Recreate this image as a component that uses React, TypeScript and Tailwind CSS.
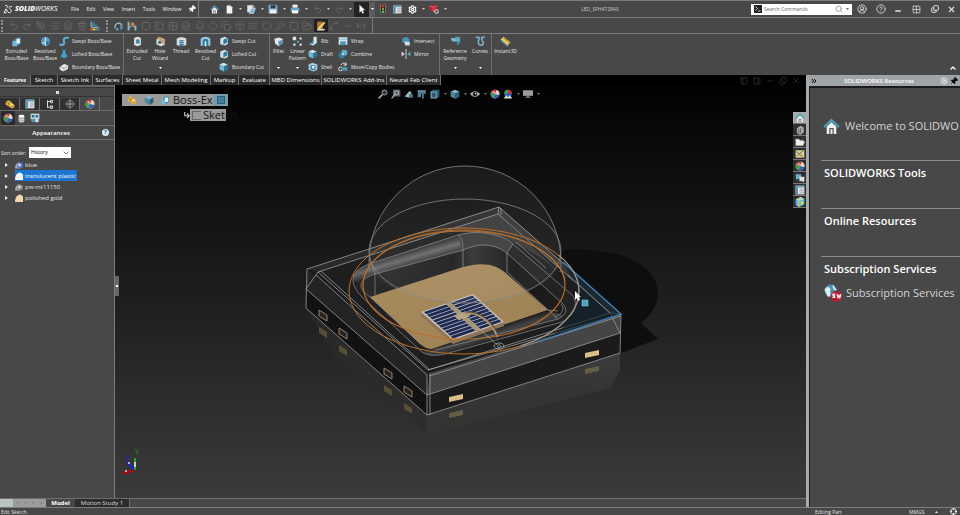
import { useState, type ReactNode } from 'react'
import {
  Bell,
  Box,
  ChevronDown,
  ChevronUp,
  ChevronsRight,
  CircleHelp,
  CircleUserRound,
  Copy,
  Crosshair,
  Diamond,
  FlipHorizontal2,
  FolderOpen,
  Grid2x2,
  Hexagon,
  Layers,
  List,
  Minus,
  PanelLeft,
  PanelRight,
  PenTool,
  Pin,
  Redo2,
  Search,
  Settings,
  Spline,
  Square,
  Trash2,
  Undo2,
  Waves,
  Wrench,
  X,
} from 'lucide-react'

/* ---------- icons ---------- */

const glyphs: Record<string, ReactNode> = {
  home: (
    <>
      <path d="M3.5 8v7h9V8L8 4z" fill="#f2f2f2" />
      <path d="M1 8.5 8 2l7 6.5" fill="none" stroke="#4f9ab8" strokeWidth="2.2" />
      <path d="M6.5 15v-5h3v5" fill="none" stroke="#555" strokeWidth="1.2" />
    </>
  ),
  file: (
    <>
      <path d="M3 1h7l3 3v11H3z" fill="#f5f5f5" />
      <path d="M10 1v3h3z" fill="#999" />
    </>
  ),
  open: (
    <>
      <path d="M2 2h7l2 2v9H2z" fill="#e6e6e6" />
      <path d="M5 15 8 7h7l-3 8z" fill="#7fb7d0" stroke="#d8e8ee" />
      <path d="M9 2c3 0 4 2 4 4" fill="none" stroke="#eee" strokeWidth="1.4" />
    </>
  ),
  save: (
    <>
      <path d="M1 1h12l2 2v12H1z" fill="#7fb3cf" />
      <path d="M4 2h8v5H4z" fill="#2d3f4a" />
      <path d="M3 9h10v6H3z" fill="#eee" />
    </>
  ),
  print: (
    <>
      <path d="M4 1h8v5H4z" fill="#f2f2f2" />
      <path d="M1 6h14v6H1z" fill="#5ba4c6" />
      <path d="M3 10h10v5H3z" fill="#fff" />
    </>
  ),
  cursor: <path d="M4 1v13l3-3 2.2 4.4 2-1L9 10h4z" fill="#fff" />,
  traffic: (
    <>
      <rect x="4" y="0" width="8" height="16" rx="3" fill="#222" stroke="#a9a37c" />
      <circle cx="8" cy="3.7" r="2" fill="#e04136" />
      <circle cx="8" cy="8" r="1.6" fill="#c7b458" />
      <circle cx="8" cy="12.3" r="2" fill="#5bd06a" />
    </>
  ),
  sheet: (
    <>
      <path d="M1 1h14v14H1z" fill="#f2f2f2" />
      <path d="M1 1h14v3H1zM1 4h4v11H1z" fill="#5b9ab8" />
      <path d="M7 6.5h7M7 9.5h7M7 12.5h7M2 7h2M2 10h2M2 13h2" stroke="#667" />
    </>
  ),
  cubeRed: (
    <>
      <path d="m7 1 6 2v6l-6 4-6-4V3z" fill="#c32234" />
      <path d="m1 3 6 2 6-2M7 5v8" fill="none" stroke="#ee8088" />
      <circle cx="12" cy="12" r="3" fill="#555" stroke="#fff" strokeWidth="1.3" />
    </>
  ),
  boss: (
    <>
      <path d="M5 5 9 2h5v9l-4 3H5z" fill="#3f8fb3" />
      <path d="M2 7h7v8H2z" fill="#74b9d6" />
      <path d="M8 4h5v7H8z" fill="#e8f0f3" />
    </>
  ),
  revolve: (
    <>
      <circle cx="8" cy="8" r="6.5" fill="#5a9fc0" />
      <path d="M8 2v12M3 11c4-1 6-4 5-9" stroke="#c4e2ef" strokeWidth="1.6" fill="none" />
      <path d="M8 8h6l-3 6z" fill="#2d6c8c" />
    </>
  ),
  sweep: (
    <path d="M2 14c5 1 7-1 6-5s0-7 6-6" fill="none" stroke="#58acd0" strokeWidth="3.6" strokeLinecap="round" />
  ),
  loft: <path d="M6 1h4l1 6 3 5-6 3-6-3 3-5z" fill="#4c9fc3" stroke="#235e78" />,
  boundary: (
    <>
      <path d="m1 8 7-5 7 2-1 6-7 4-6-3z" fill="#e9e9e9" />
      <path d="m2 8 6 2 6-4M8 10v4" fill="none" stroke="#777" />
    </>
  ),
  cut: (
    <>
      <path d="M3 3 8 1l5 2v10l-5 2-5-2z" fill="#dedede" />
      <path d="M6 5h5v6H6z" fill="#3d86a5" />
    </>
  ),
  hole: (
    <>
      <path d="M2 5 9 2l5 3v8l-6 2-6-3z" fill="#ddd" />
      <path d="m2 3 4-2 6 4 3 6-3 1-4-6z" fill="#c69a6b" />
      <circle cx="7" cy="9" r="2.5" fill="#3a6d86" />
    </>
  ),
  thread: (
    <>
      <path d="M1 4c4-3 10-3 14 0v9c-4 2-10 2-14 0z" fill="#dcdcdc" />
      <path d="M5 6h6v9H5z" fill="#3c7e9d" />
      <path d="M5 8h6M5 11h6" stroke="#a9d3e6" />
    </>
  ),
  revolvedCut: (
    <>
      <path d="M1 4c4-4 10-4 14 0v10H1z" fill="#9fcbe0" />
      <path d="M4 7c0-4 8-4 8 0v8h-3V8H7v7H4z" fill="#2f7a9c" />
      <path d="M7 8h2v7H7z" fill="#eee" />
    </>
  ),
  cutSmall: (
    <>
      <path d="M2 4 9 1l5 3v9l-5 2-7-2z" fill="#cfe0e8" />
      <path d="M7 14V8c0-3 3-4 6-4v6z" fill="#2f7a9c" />
    </>
  ),
  fillet: (
    <>
      <path d="M2 4 8 2l6 2v6l-6 5-5-4z" fill="#e6e6e6" />
      <path d="M8 7c3 0 6-1 6-3v6l-6 5z" fill="#4c97b8" />
    </>
  ),
  pattern: (
    <>
      <path d="M1 1h5v5H1zM11 2h3v3h-3zM2 11h3v3H2zM11 11h3v3h-3z" fill="#dbe7ec" />
      <path d="M7 7h3v3H7z" fill="#58a6c8" />
    </>
  ),
  rib: (
    <>
      <path d="M9 1h5v10l-6 4-6-2 6-4z" fill="#cfe5ee" />
      <path d="M9 5v7l-6 2z" fill="#3b8cb0" />
    </>
  ),
  draft: (
    <>
      <path d="m1 4 6-3 7 3-6 3z" fill="#cfe5ee" />
      <path d="m1 4 7 3v8l-7-3z" fill="#76b8d3" />
      <path d="m8 7 6-3 1 8-7 3z" fill="#2f7596" />
    </>
  ),
  shell: (
    <>
      <path d="m1 4 6-3 8 3v8l-6 3-8-3z" fill="#a8cfe0" />
      <path d="M4 5h8v7l-4 1-4-2z" fill="#2f7596" />
      <path d="M6 6h5l-1 5-4-1z" fill="#dcebf1" />
    </>
  ),
  wrap: (
    <>
      <path d="M1 2h14v12H1z" fill="#d7e7ee" />
      <path d="M1 5h14M4 9h8v5H4z" fill="#4b96b6" stroke="#4b96b6" />
    </>
  ),
  combine: (
    <>
      <circle cx="10" cy="6" r="5" fill="#64abcb" />
      <circle cx="6" cy="10" r="5" fill="#317c9f" />
      <path d="M6 6h4v4H6z" fill="#a5d4e8" />
    </>
  ),
  copyBody: (
    <>
      <circle cx="4" cy="11" r="3" fill="none" stroke="#ddd" strokeWidth="1.6" />
      <path d="M7 8h8v6H7z" fill="#4b96b6" />
      <path d="M5 5c2-4 6-4 8-1M13 1v4H9" fill="none" stroke="#eee" strokeWidth="1.6" />
    </>
  ),
  intersect: (
    <>
      <path d="M2 4 8 1l5 3v5l-6 3-5-3z" fill="#4a94b5" />
      <path d="M5 9h9v6H7z" fill="#c9dfe8" />
    </>
  ),
  mirror: (
    <>
      <path d="M1 4l5 4-5 4z" fill="#dedede" />
      <path d="m15 4-5 4 5 4z" fill="#58a6c8" />
      <path d="M8 0v16" stroke="#eee" strokeWidth="1.3" />
    </>
  ),
  refGeom: (
    <>
      <path d="M1 3h8l2 5H3z" fill="#7bb6cf" />
      <path d="M7 1h8v9l-5 4V8z" fill="#3f88a8" />
      <path d="M9 2h5v6H9z" fill="#6aa9c4" />
    </>
  ),
  curves: (
    <path
      d="M1 2h4c3 0-1 4 0 8 1 5 7 4 7 0 0-3-4-5-2-8h4"
      fill="none"
      stroke="#7eaec6"
      strokeWidth="2.400"
    />
  ),
  instant: (
    <>
      <path d="m1 5 4-4 10 8-4 5z" fill="#e9cc5b" />
      <path d="m1 5 10 9v2L1 8z" fill="#3d87a7" />
      <path d="m5 3 2 2m0-1 2 2m0 0 2 2m0 0 2 2" stroke="#6b5c1a" />
    </>
  ),
  part: (
    <>
      <path d="M1 5 5 2l5 2 1 3 4 2v4l-4 2-6-4-4-2z" fill="#e1b44a" />
      <path d="m1 5 5 2 4-3M6 7v4M11 11v4" fill="none" stroke="#8d6511" />
      <circle cx="10.500" cy="8.500" r="2" fill="#f4dc94" />
    </>
  ),
  body: (
    <>
      <path d="m1 4 7-3 7 3-6 3z" fill="#86b7c9" />
      <path d="m1 4 8 3v9l-8-4z" fill="#4d8aa1" />
      <path d="m9 7 6-3v8l-6 4z" fill="#2d6177" />
    </>
  ),
  tree: (
    <path d="M4 2v12M4 4h5M4 13h5M9 2h3v4H9zM9 11h3v4H9z" fill="none" stroke="#e5e5e5" strokeWidth="1.5" />
  ),
  target: (
    <>
      <circle cx="8" cy="8" r="5.500" fill="none" stroke="#aaa" />
      <path d="M8 0v16M0 8h16" stroke="#aaa" />
      <circle cx="8" cy="8" r="2" fill="none" stroke="#aaa" />
    </>
  ),
  ball: (
    <>
      <circle cx="8" cy="8" r="7" fill="#e9e9e9" />
      <path d="M8 8 11 1.500A7 7 0 0 0 2 5z" fill="#ca2f38" />
      <path d="M8 8 2 5a7 7 0 0 0 4 9.500z" fill="#3f9f47" />
      <path d="m8 8-2 6.500A7 7 0 0 0 15 9z" fill="#315fba" />
      <path d="m8 8 7 1a7 7 0 0 0-4-7.500z" fill="#ecd3bd" />
      <circle cx="6" cy="5" r="1.800" fill="#fff" opacity=".6" />
    </>
  ),
  scene: (
    <>
      <circle cx="8" cy="7" r="6" fill="#315fba" />
      <path d="M8 7V1a6 6 0 0 0-6 6z" fill="#3f9f47" />
      <path d="M8 7V1a6 6 0 0 1 6 6z" fill="#ca2f38" />
      <path d="m1 15 4-5 3 3 3-3 4 5z" fill="#ddd" />
    </>
  ),
  disc: (
    <>
      <path d="M3 3v10c0 3 10 3 10 0V3z" fill="#d0d0d0" />
      <ellipse cx="8" cy="3.500" rx="5" ry="2" fill="#fff" />
      <path d="M3 7c2 2 8 2 10 0M3 11c2 2 8 2 10 0" fill="none" stroke="#8a8a8a" />
    </>
  ),
  decal: (
    <>
      <path d="M1 1h14v9H1z" fill="#bcd7e3" />
      <path d="M3 3h4v4H3zM9 3h4v4H9z" fill="#37708a" />
      <circle cx="5" cy="12" r="3" fill="#4f98b8" />
      <circle cx="11" cy="12" r="3" fill="#dcdcdc" />
    </>
  ),
  lens: (
    <>
      <circle cx="10.500" cy="5.500" r="4" fill="#27363d" stroke="#93a3ab" strokeWidth="1.600" />
      <path d="m7 9-6 6" stroke="#b5b0a6" strokeWidth="2.400" />
    </>
  ),
  zoomArea: (
    <>
      <path d="M3 1h12v11H3z" fill="#5d6468" />
      <circle cx="9" cy="6" r="3.300" fill="none" stroke="#a9b6bc" strokeWidth="1.5" />
      <path d="m7 8-6 7" stroke="#a9b6bc" strokeWidth="2" />
    </>
  ),
  view: (
    <>
      <path d="m1 12 8-9 3 2-3 9z" fill="#a9b9c0" />
      <path d="M8 8h6v6H8z" fill="#4d7d90" />
    </>
  ),
  section: (
    <>
      <path d="M1 3h13v5h-3v7H8V8H5v5H1z" fill="#47788b" />
      <path d="M1 3h13M5 8v5" stroke="#a1bcc7" strokeWidth="1.5" />
    </>
  ),
  viewCube: (
    <>
      <path d="M4 1h11v11l-4 3H1V4z" fill="#2d6177" />
      <path d="M1 4h10v11H1z" fill="#6c98a9" />
      <path d="M3 6h6v7H3z" fill="#33596a" />
    </>
  ),
  eye: (
    <>
      <path d="M0 8c4-6 12-6 16 0-4 6-12 6-16 0z" fill="#a5a5a5" />
      <circle cx="8" cy="8" r="3.500" fill="#222" />
      <circle cx="9" cy="7" r="1.200" fill="#eee" />
    </>
  ),
  monitor: (
    <>
      <path d="M0 2h16v9H0z" fill="#9b9b9b" />
      <path d="M6 11h4v2h3v1H3v-1h3z" fill="#888" />
    </>
  ),
  chart: (
    <>
      <path d="M2 1v9h12" fill="none" stroke="#9dc3d4" strokeWidth="1.6" />
      <path d="M3 2h5v3h3v4H3z" fill="#42748a" />
      <path d="M0 12h4v3H0z" fill="#dd4b43" />
      <path d="M4 12h4v3H4z" fill="#e4c547" />
      <path d="M8 12h4v3H8z" fill="#59b263" />
      <path d="M12 12h4v3h-4z" fill="#8561c8" />
    </>
  ),
  link: (
    <>
      <path d="M2 12a6 6 0 1 1 11-5" fill="none" stroke="#9ec0cf" strokeWidth="2" />
      <circle cx="5" cy="13" r="2" fill="#5c9fbd" />
      <path d="m9 6 6 4-4 5z" fill="#4d95b5" />
    </>
  ),
  mate: (
    <>
      <path d="M1 1h3v14H1zM12 7h3v8h-3z" fill="#87b8cd" />
      <circle cx="9" cy="5" r="3" fill="#d6803b" />
      <path d="M7 8 4 11m6-3 2 2" stroke="#ddd" strokeWidth="1.500" />
    </>
  ),
  bolt: (
    <>
      <path d="M2 1h9v14H2z" fill="#b27a35" />
      <path d="M4 10 13 1l2 2-8 9-4 1z" fill="#f5d26a" />
      <path d="M2 13h12v2H2z" fill="#eee" />
    </>
  ),
  library: (
    <>
      <path d="m3 5 6-4 5 3v8l-6 4-5-3z" fill="#aaa" />
      <path d="M6 6v8M9 5v8" stroke="#555" strokeWidth="1.3" />
    </>
  ),
  folder: <path d="M1 3h5l2 2h6v2h2l-3 7H1z" fill="#eee" stroke="#777" />,
  palette: (
    <>
      <path d="M1 2h14v12H1z" fill="#d8cda1" />
      <path d="m2 4 5 4 6-5M3 12l4-4 6 5" fill="none" stroke="#766b32" strokeWidth="1.5" />
    </>
  ),
  forum: (
    <>
      <path d="M1 2h9v7H5l-3 2z" fill="#6ab0ce" />
      <path d="M7 6h8v6l-1 3-2-2H7z" fill="#ddd" />
    </>
  ),
  cubeYellow: (
    <>
      <path d="m1 4 8-4 6 3v9l-8 4-6-3z" fill="#4eb3df" />
      <path d="m1 4 6 2 8-3-6-3z" fill="#9be0f6" />
      <path d="M5 6v9l2 1V6zM9 1l-5 3 2 1 6-3zM9 8l4-2v5l-4 2z" fill="#f0d24d" />
    </>
  ),
  globe: (
    <>
      <circle cx="6" cy="6" r="5.500" fill="#4d91ae" />
      <path d="M1 5c3-4 5 0 4 1s2 3-1 5zM8 1c0 3 1 4 3 4" fill="#dff0f5" stroke="#dff0f5" />
      <circle cx="11" cy="11" r="5" fill="#b31f2e" />
      <path d="M10 9H8v1.500h1.500V12H7.500M11.500 9l1 3 .8-2 .8 2 1-3" fill="none" stroke="#fff" />
    </>
  ),
}

function Glyph({ name, className = 'size-[10px]' }: { name: string; className?: string }) {
  return (
    <svg viewBox="0 0 16 16" className={`shrink-0 ${className}`} aria-hidden="true">
      {glyphs[name]}
    </svg>
  )
}

function Caret({ className = 'text-white' }: { className?: string }) {
  return (
    <svg viewBox="0 0 6 4" className={`h-[2px] w-[3px] shrink-0 ${className}`} aria-hidden="true">
      <path d="M0 0h6L3 4z" fill="currentColor" />
    </svg>
  )
}

/* ---------- title bar ---------- */

const menus = [
  { label: 'File', width: 'w-[16px]' },
  { label: 'Edit', width: 'w-[16px]' },
  { label: 'View', width: 'w-[19px]' },
  { label: 'Insert', width: 'w-[21px]' },
  { label: 'Tools', width: 'w-[20px]' },
  { label: 'Window', width: 'w-[26px]' },
]

function QuickButton({ label, children }: { label: string; children: ReactNode }) {
  return (
    <>
      <button aria-label={label} className="flex w-[14px] shrink-0 justify-center">
        {children}
      </button>
      <span className="flex w-[8px] shrink-0 justify-center">
        <Caret className="text-[#c8c8c8]" />
      </span>
    </>
  )
}

function TitleBar() {
  const [query, setQuery] = useState('')
  return (
    <header className="flex h-[18px] shrink-0 items-center border-y border-[#7c7c7c] bg-[#484848]">
      <div className="flex w-[67px] shrink-0 items-center gap-[2px] pl-[3px] text-white">
        <svg viewBox="0 0 20 20" className="h-[11px] w-[10px]" fill="none" stroke="#fff" strokeWidth="1.800">
          <path d="M4 2c6-1 7 3 3 5M2 17c8 0 9-8 2-7M2 17l4-8M18 4c-7-1-6 4-3 6s2 7-5 6" />
        </svg>
        <span className="text-[7px] italic leading-[10px]">
          <b className="font-extrabold">SOLID</b>WORKS
        </span>
      </div>
      <nav className="flex shrink-0 text-[#f2f2f2]">
        {menus.map((m) => (
          <button key={m.label} className={`${m.width} shrink-0 text-center`}>
            {m.label}
          </button>
        ))}
      </nav>
      <button aria-label="Pin menu" className="flex w-[13px] shrink-0 justify-center">
        <Pin className="size-[8px] rotate-45 fill-white text-white" />
      </button>
      <div className="flex h-full shrink-0 items-center border-l border-[#7c7c7c] pl-[8px]">
        <button aria-label="Home" className="flex w-[15px] justify-center">
          <Glyph name="home" className="size-[9px]" />
        </button>
        <QuickButton label="New">
          <Glyph name="file" className="size-[9px]" />
        </QuickButton>
        <QuickButton label="Open">
          <Glyph name="open" />
        </QuickButton>
        <QuickButton label="Save">
          <Glyph name="save" />
        </QuickButton>
        <QuickButton label="Print">
          <Glyph name="print" />
        </QuickButton>
        <QuickButton label="Undo">
          <Undo2 className="size-[9px] text-[#6c6c6c]" />
        </QuickButton>
        <QuickButton label="Redo">
          <Redo2 className="size-[9px] text-[#6c6c6c]" />
        </QuickButton>
        <button aria-label="Select" className="flex h-[15px] w-[15px] items-center justify-center bg-[#222]">
          <Glyph name="cursor" />
        </button>
        <span className="flex h-[15px] w-[6px] items-center justify-center bg-[#5c5c5c]">
          <Caret />
        </span>
        <button aria-label="Rebuild" className="flex w-[15px] justify-center">
          <Glyph name="traffic" />
        </button>
        <button aria-label="File properties" className="flex w-[15px] justify-center">
          <Glyph name="sheet" className="size-[9px]" />
        </button>
        <QuickButton label="Options">
          <Settings className="size-[9px] text-white" strokeWidth={3} />
        </QuickButton>
        <QuickButton label="Account">
          <Glyph name="cubeRed" />
        </QuickButton>
      </div>
      <h1 className="flex-1 text-center font-normal text-[#c8c8c8]">LED_SFH4728AS</h1>
      <label className="flex h-[11px] w-[101px] shrink-0 items-center bg-white px-[3px]">
        <svg viewBox="0 0 16 16" className="size-[8px]" aria-hidden="true">
          <path d="M0 0h16v16H0z" fill="#222" />
          <path d="m3 3 4 4-4 4M8 12h5" fill="none" stroke="#fff" strokeWidth="1.500" />
        </svg>
        <input
          aria-label="Search Commands"
          placeholder="Search Commands"
          value={query}
          onChange={(e) => setQuery(e.target.value)}
          className="min-w-0 flex-1 px-[2px] text-[5px] leading-[8px] text-[#333] outline-none placeholder:text-[#666]"
        />
        <Search className="mr-[3px] size-[8px] text-[#777]" />
        <Caret className="text-[#666]" />
      </label>
      <div className="flex w-[108px] shrink-0 items-center text-[#e2e2e2]">
        <button aria-label="Login" className="flex w-[20px] justify-center">
          <CircleUserRound className="size-[10px]" />
        </button>
        <button aria-label="Help" className="flex w-[17px] justify-center">
          <CircleHelp className="size-[10px]" />
        </button>
        <button aria-label="Minimize" className="flex w-[18px] justify-center pt-[3px]">
          <Minus className="size-[8px]" strokeWidth={4} />
        </button>
        <button aria-label="Span displays" className="flex w-[19px] justify-center">
          <Grid2x2 className="size-[9px]" />
        </button>
        <button aria-label="Restore" className="flex w-[17px] justify-center">
          <Copy className="size-[8px] -scale-y-100" strokeWidth={3} />
        </button>
        <button aria-label="Close" className="flex w-[17px] justify-center">
          <X className="size-[9px]" strokeWidth={3} />
        </button>
      </div>
    </header>
  )
}

/* ---------- dimmed tool strip ---------- */

const dimFirst = [Undo2, Redo2, PenTool, List, Layers, Trash2]
const dimMiddle = [Square, PanelLeft, Grid2x2, Layers, Bell, Diamond, Copy, Box, Waves, Hexagon, Wrench, Square, FolderOpen]
const dimLast = [Spline, Minus, FlipHorizontal2]

function ToolStrip() {
  const dim = (Icon: typeof Undo2, i: number) => (
    <button key={i} aria-label={`Sketch tool ${i + 1}`} disabled className="flex flex-1 justify-center">
      <Icon className="size-[10px] text-[#6a6a6a]" />
    </button>
  )
  return (
    <div className="flex h-[16px] shrink-0 items-center border-b border-[#7c7c7c]">
      <span className="mr-[4px] ml-[1px] h-[12px] border-l-2 border-dotted border-[#8f8f8f]" />
      <div className="flex w-[95px] items-center">
        {dimFirst.map(dim)}
        <button aria-label="Appearance chart" className="flex flex-1 justify-center">
          <Glyph name="chart" />
        </button>
      </div>
      <span className="mr-[4px] ml-[4px] h-[12px] border-l-2 border-dotted border-[#8f8f8f]" />
      <div className="flex h-full w-[261px] items-center border-r border-[#7c7c7c] pr-[4px]">
        <button aria-label="Link" className="flex flex-1 justify-center">
          <Glyph name="link" />
        </button>
        <button aria-label="Mate" className="flex flex-1 justify-center">
          <Glyph name="mate" />
        </button>
        {dimMiddle.map(dim)}
        <button aria-label="Sketch" className="flex h-[13px] flex-1 items-center justify-center bg-[#222]">
          <Glyph name="bolt" />
        </button>
        {dimLast.map(dim)}
      </div>
    </div>
  )
}

/* ---------- ribbon ---------- */

interface BigProps {
  icon: string
  lines: string[]
  width: string
  menu?: boolean
}

function BigButton({ icon, lines, width, menu }: BigProps) {
  return (
    <button className={`${width} flex h-full shrink-0 flex-col items-center pt-[2px] text-[#e6e6e6]`}>
      <Glyph name={icon} className="size-[11px]" />
      <span className="mt-[1px] h-[16px] whitespace-nowrap text-center leading-[7px]">
        {lines.map((line) => (
          <span key={line} className="block">
            {line}
          </span>
        ))}
      </span>
      {menu && (
        <span className="pt-[3px]">
          <Caret />
        </span>
      )}
    </button>
  )
}

function SmallColumn({ items, width }: { items: [string, string][]; width: string }) {
  return (
    <div className={`${width} flex shrink-0 flex-col`}>
      {items.map(([icon, label]) => (
        <button key={label} className="flex h-[13px] items-center gap-[3px] whitespace-nowrap text-[#e6e6e6]">
          <Glyph name={icon} />
          {label}
        </button>
      ))}
    </div>
  )
}

function Ribbon() {
  const group = 'flex shrink-0 border-r border-[#6e6e6e]'
  return (
    <div className="flex h-[41px] shrink-0">
      <div className={`${group} w-[124px] pl-[2px]`}>
        <BigButton icon="boss" lines={['Extruded', 'Boss/Base']} width="w-[29px]" />
        <BigButton icon="revolve" lines={['Revolved', 'Boss/Base']} width="w-[28px]" />
        <SmallColumn
          width="w-[62px]"
          items={[
            ['sweep', 'Swept Boss/Base'],
            ['loft', 'Lofted Boss/Base'],
            ['boundary', 'Boundary Boss/Base'],
          ]}
        />
      </div>
      <div className={`${group} w-[146px]`}>
        <BigButton icon="cut" lines={['Extruded', 'Cut']} width="w-[26px]" />
        <BigButton icon="hole" lines={['Hole', 'Wizard']} width="w-[20px]" menu />
        <BigButton icon="thread" lines={['Thread']} width="w-[22px]" />
        <BigButton icon="revolvedCut" lines={['Revolved', 'Cut']} width="w-[27px]" />
        <SmallColumn
          width="w-[50px]"
          items={[
            ['cutSmall', 'Swept Cut'],
            ['cutSmall', 'Lofted Cut'],
            ['draft', 'Boundary Cut'],
          ]}
        />
      </div>
      <div className={`${group} w-[170px]`}>
        <BigButton icon="fillet" lines={['Fillet']} width="w-[17px]" menu />
        <BigButton icon="pattern" lines={['Linear', 'Pattern']} width="w-[21px]" menu />
        <SmallColumn
          width="w-[30px]"
          items={[
            ['rib', 'Rib'],
            ['draft', 'Draft'],
            ['shell', 'Shell'],
          ]}
        />
        <SmallColumn
          width="w-[63px]"
          items={[
            ['wrap', 'Wrap'],
            ['combine', 'Combine'],
            ['copyBody', 'Move/Copy Bodies'],
          ]}
        />
        <SmallColumn
          width="w-[38px]"
          items={[
            ['intersect', 'Intersect'],
            ['mirror', 'Mirror'],
          ]}
        />
      </div>
      <div className={`${group} w-[52px]`}>
        <BigButton icon="refGeom" lines={['Reference', 'Geometry']} width="w-[30px]" menu />
        <BigButton icon="curves" lines={['Curves']} width="w-[20px]" menu />
      </div>
      <BigButton icon="instant" lines={['Instant3D']} width="w-[27px]" />
      <button aria-label="Collapse ribbon" className="ml-auto self-end p-[3px]">
        <ChevronUp className="size-[8px] text-white" strokeWidth={4} />
      </button>
    </div>
  )
}

const commandTabs = [
  { label: 'Features', width: 'w-[31px]' },
  { label: 'Sketch', width: 'w-[27px]' },
  { label: 'Sketch Ink', width: 'w-[35px]' },
  { label: 'Surfaces', width: 'w-[30px]' },
  { label: 'Sheet Metal', width: 'w-[39px]' },
  { label: 'Mesh Modeling', width: 'w-[49px]' },
  { label: 'Markup', width: 'w-[28px]' },
  { label: 'Evaluate', width: 'w-[31px]' },
  { label: 'MBD Dimensions', width: 'w-[52px]' },
  { label: 'SOLIDWORKS Add-Ins', width: 'w-[65px]' },
  { label: 'Neural Fab Client', width: 'w-[54px]' },
]

function CommandTabs() {
  const [active, setActive] = useState('Features')
  return (
    <div className="flex h-[10px] shrink-0 bg-black">
      <div role="tablist" className="flex">
        {commandTabs.map((tab) => (
          <button
            key={tab.label}
            role="tab"
            aria-selected={tab.label === active}
            onClick={() => setActive(tab.label)}
            className={`${tab.width} shrink-0 whitespace-nowrap border-r border-[#6e6e6e] text-center leading-[10px] text-white ${
              tab.label === active ? 'bg-[#484848] text-[5px] font-bold' : 'bg-[#2b2b2b] text-[6px]'
            }`}
          >
            {tab.label}
          </button>
        ))}
      </div>
      <div className="ml-auto flex items-end gap-[5px] pr-[6px] text-[#3a3a3a]">
        <PanelLeft className="size-[8px]" />
        <PanelRight className="size-[8px]" />
        <Minus className="size-[8px]" />
        <Copy className="size-[8px] -scale-y-100" />
        <X className="size-[8px]" />
      </div>
    </div>
  )
}

/* ---------- appearances panel ---------- */

const managerTabs = ['part', 'sheet', 'tree', 'target', 'ball']

const appearances = [
  { name: 'blue', color: '#5b78c9', round: true },
  { name: 'translucent plastic', color: '#f2f6fa', round: false },
  { name: 'pw-mt11150', color: '#8b8b8b', round: true },
  { name: 'polished gold', color: '#f0d9ab', round: false },
]

function Swatch({ color, round }: { color: string; round: boolean }) {
  return (
    <svg viewBox="0 0 16 16" className="size-[8px] shrink-0" aria-hidden="true">
      {round ? (
        <>
          <path d="M0 15C0 8 3 4 8 2l2 13z" fill="#aaa" />
          <circle cx="10" cy="9" r="6" fill={color} />
          <circle cx="9" cy="8" r="2.500" fill="#eee" />
        </>
      ) : (
        <path d="M0 16C0 7 4 1 11 1l5 4v11z" fill={color} />
      )}
    </svg>
  )
}

function AppearancePanel() {
  const [selected, setSelected] = useState('translucent plastic')
  return (
    <aside className="flex w-[115px] shrink-0 flex-col border-r border-[#7c7c7c] bg-[#484848] text-[#e4e4e4]">
      <div className="h-[3px] border-b border-[#333] bg-[#666]" />
      <div className="flex h-[9px] items-center justify-center border-b border-[#333]">
        <span className="size-[3px] bg-[#ddd]" />
      </div>
      <div className="flex h-[14px] border-b border-[#6e6e6e] pt-[1px]">
        {managerTabs.map((icon) => (
          <button
            key={icon}
            aria-label={icon}
            className={`flex w-[20px] items-center justify-center border-r border-[#6e6e6e] ${
              icon === 'ball' ? 'bg-[#484848]' : 'bg-[#303030]'
            }`}
          >
            <Glyph name={icon} />
          </button>
        ))}
      </div>
      <div className="flex h-[15px] items-center border-b border-[#6e6e6e] pl-[1px]">
        <button aria-label="View appearances" className="flex size-[14px] items-center justify-center bg-[#2a2a2a]">
          <Glyph name="ball" />
        </button>
        <button aria-label="View decals" className="flex w-[13px] justify-center">
          <Glyph name="disc" className="size-[9px]" />
        </button>
        <button aria-label="View scene" className="flex w-[14px] justify-center">
          <Glyph name="decal" />
        </button>
      </div>
      <div className="flex h-[14px] items-center border-b border-[#6e6e6e]">
        <h2 className="w-[102px] text-center text-[6px] font-semibold text-white">Appearances</h2>
        <button
          aria-label="Help"
          className="size-[7px] rounded-full bg-[#d7ecf5] text-center font-bold leading-[7px] text-[#26566b]"
        >
          ?
        </button>
      </div>
      <div className="flex h-[19px] items-center pt-[6px] pl-[1px]">
        <label htmlFor="sort" className="w-[28px] whitespace-nowrap">
          Sort order:
        </label>
        <div className="relative">
          <select
            id="sort"
            defaultValue="History"
            className="block h-[11px] w-[42px] appearance-none bg-white pl-[2px] leading-[11px] text-black"
          >
            <option>History</option>
          </select>
          <ChevronDown className="pointer-events-none absolute top-[2px] right-[1px] size-[8px] text-[#333]" />
        </div>
      </div>
      <ul>
        {appearances.map((a) => (
          <li key={a.name} className="flex h-[11px] items-center">
            <svg viewBox="0 0 4 6" className="mr-[7px] ml-[5px] h-[4px] w-[3px]" aria-hidden="true">
              <path d="M0 0v6l4-3z" fill="#fff" />
            </svg>
            <button
              onClick={() => setSelected(a.name)}
              className={`flex h-[11px] items-center gap-[2px] pr-[1px] text-[6px] ${
                a.name === selected ? 'bg-[#1b75d1] text-white' : ''
              }`}
            >
              <Swatch color={a.color} round={a.round} />
              {a.name}
            </button>
          </li>
        ))}
      </ul>
    </aside>
  )
}

/* ---------- 3D view ---------- */

const leftPads = [
  [323, 315],
  [343, 333],
  [388, 373],
  [408, 391],
]
const rightPads = [
  [592, 354],
  [456, 398],
]

const cavityRim =
  'M353 280c0-9 9-14 22-18l83-27c14-4 28-3 40 1 6 2 10 4 15 8l59 51c7 8 3 20-10 27L445 354c-10 2-17 2-23-2l-60-55c-6-6-9-12-9-17z'
const cavityWall =
  'M361 286c0-6 5-9 14-12l88-24c7-3 13-5 19-5 11 0 18 3 25 8l56 51c5 5 3 11-5 15L435 350l-15-6-50-47c-5-4-9-7-9-11z'

function Scene() {
  return (
    <svg
      viewBox="115 85 691 413"
      preserveAspectRatio="xMidYMid slice"
      className="absolute inset-0 size-full"
      aria-hidden="true"
    >
      <defs>
        <linearGradient id="backdrop" x1="0" y1="0" x2="0" y2="1">
          <stop offset="0" stopColor="#020202" />
          <stop offset=".25" stopColor="#101010" />
          <stop offset=".55" stopColor="#202020" />
          <stop offset="1" stopColor="#3b3b3b" />
        </linearGradient>
        <linearGradient id="gold" x1="0" y1="0" x2="1" y2="1">
          <stop offset="0" stopColor="#a98c5e" />
          <stop offset="1" stopColor="#9c8053" />
        </linearGradient>
        {/* runs across the back-left edge so the rim reads as rounded */}
        <linearGradient id="rim" gradientUnits="userSpaceOnUse" x1="406" y1="250" x2="411" y2="267">
          <stop offset="0" stopColor="#242424" />
          <stop offset=".5" stopColor="#6a6868" />
          <stop offset="1" stopColor="#262626" />
        </linearGradient>
        <linearGradient id="frontRim" gradientUnits="userSpaceOnUse" x1="490" y1="328" x2="494" y2="341">
          <stop offset="0" stopColor="#1c1c1c" />
          <stop offset=".5" stopColor="#444" />
          <stop offset="1" stopColor="#1e1e1e" />
        </linearGradient>
        <linearGradient id="wall" x1="0" y1="0" x2="1" y2="0">
          <stop offset="0" stopColor="#2c2c2e" />
          <stop offset=".45" stopColor="#1b1b1d" />
          <stop offset=".55" stopColor="#303030" />
          <stop offset=".75" stopColor="#161616" />
          <stop offset="1" stopColor="#1e1e1e" />
        </linearGradient>
        <linearGradient id="mirror" x1="0" y1="0" x2="0" y2="1">
          <stop offset="0" stopColor="#4a4a4a" stopOpacity=".6" />
          <stop offset="1" stopColor="#3a3a3a" stopOpacity=".2" />
        </linearGradient>
        <clipPath id="rightArc">
          <path d="M560 252h30v100h-72z" />
        </clipPath>
      </defs>
      <path d="M115 85h691v413H115z" fill="url(#backdrop)" />

      {/* cast shadow */}
      <path d="M560 250c50-5 98 12 98 43 0 12-7 22-17 30l17 16-37 14-60-60z" fill="#0e0e0e" />

      {/* floor reflection */}
      <path d="m306 308 121 107v20l-90-75z" fill="#2c2c2c" opacity=".7" />
      <path d="m427 415 193-62v18l-10 17-183 47z" fill="url(#mirror)" />

      {/* package body */}
      <path d="m307 269 192-62 122 107-1 39-193 62-121-107z" fill="#1c1c1c" />
      <path d="m306 289 121 106v20L306 308z" fill="#121213" />
      <path d="m427 395 193-62v20l-193 62z" fill="#1b1b1d" />
      <path d="m430 373 191-59-1 19-193 62z" fill="#454545" />
      <path d="m307 269 120 104v22L306 289z" fill="#242424" />
      <path d="m318 272 180-58 112 99-181 57z" fill="#1e1e1f" />
      <path d="m307 269 192-62v7l-181 58z" fill="#2a2a2a" />
      <path d="m498 214 1-7 122 107-11-1z" fill="#363636" />
      <path d="m498 214-58 19c28-4 55 1 78 12 17 8 32 19 42 28z" fill="#383838" />

      {/* cavity */}
      <path d={cavityRim} fill="#222" />
      <path d="M353 280c0-9 9-14 22-18l83-27 5 15-88 24c-9 3-14 6-14 12z" fill="url(#rim)" />
      <path d="M458 235c14-4 28-3 40 1l15 8-6 9c-7-5-14-8-25-8-6 0-12 2-19 5z" fill="#3a3a3a" />
      <path d={cavityWall} fill="url(#wall)" />
      <path d="m370 297 93-30c18-5 33-4 45 8l40 35-116 39c-5 0-8-2-12-5z" fill="url(#gold)" />
      <path d="m432 349 116-39 14 5c2 4-2 6-6 8L445 354c-10 2-17 2-23-2z" fill="url(#frontRim)" />
      <g fill="none" stroke="#8f8f8f" strokeWidth=".7">
        <path d={cavityRim} />
        <path d="M370 297c-5-4-9-7-9-11 0-6 5-9 14-12l88-24c7-3 13-5 19-5 11 0 18 3 25 8l56 51c5 5 3 11-5 15L435 350" />
        <path d="m513 244-6 9v20M463 250v17M458 235c4 3 5 8 5 15M375 274v21M508 273l50 46M369 258l6 16M370 297l52 48M548 310l10 1" />
        <path d="M546 268 516 242M555 318c8-5 10-10 6-14" />
      </g>

      {/* die */}
      <path d="m421 312 32 28v4l-32-28zM453 340l51-18v4l-51 18z" fill="#8d7658" />
      <path d="m421 312 52-18 31 28-51 18z" fill="#c9c0b2" />
      <g transform="matrix(52 -18 31 28 421 312)">
        {Array.from({ length: 10 }, (_, i) => (
          <g key={i} fill="#1b2a58">
            <rect x=".04" y={0.03 + i * 0.096} width=".43" height=".075" />
            <rect x=".56" y={0.03 + i * 0.096} width=".41" height=".075" />
          </g>
        ))}
        <path d="M.47 0h.09v1h-.09z" fill="#a69475" />
        <path d="M.4 .38h.22v.17H.4z" fill="#b6a486" />
      </g>
      <path d="M464 313c14-2 27 8 34 24" fill="none" stroke="#a78f6a" strokeWidth="2.600" />
      <path d="M466 312c14-1 27 9 33 25" fill="none" stroke="#302a22" strokeWidth=".8" />
      <path d="m468 318 29 27" stroke="#a3a3a3" strokeWidth=".7" />
      <ellipse cx="499" cy="346" rx="5" ry="3" fill="none" stroke="#aaa" strokeWidth=".8" />
      <circle cx="499" cy="346" r="1.500" fill="none" stroke="#aaa" strokeWidth=".6" />

      {/* body edges */}
      <g fill="none" stroke="#9c9c9c" strokeWidth=".8" strokeLinejoin="round">
        <path d="m307 269 192-62 122 107M307 269l-1 39 121 107 193-62 1-39M306 289l121 106 193-62" />
        <path d="m318 272 180-58 112 99M318 272l110 98 182-57 11 1M318 272l-12 17M610 313l10 20" />
        <path d="m316 275 111 100v40M430 373v42M428 370l193-56M429 376l192-60M321 271l109 99M498 214l1-7M501 208v7" />
      </g>

      {/* blue face highlight */}
      <path d="m563 262 58 52-84 28c22-8 42-22 42-50z" fill="#10232f" opacity=".65" />
      <path d="m568 275 42 38" stroke="#9a9a9a" strokeWidth=".8" />
      <path d="m563 262 58 52-84 28" fill="none" stroke="#3c80bb" strokeWidth="1.300" />

      {/* lens dome */}
      <path d="M369 262a96 96 0 0 1 192 0c-6 22-45 41-96 41s-92-18-96-41z" fill="#fff" opacity=".06" />
      <path d="M370 272c-1-4-1-7-1-10a96 96 0 0 1 192 0c0 3 0 6-1 10" fill="none" stroke="#8a8a8a" strokeWidth=".8" />
      <ellipse cx="465" cy="251" rx="96" ry="52" fill="none" stroke="#858585" strokeWidth=".8" />
      <g fill="none" stroke="#bb6f2b">
        <ellipse cx="464" cy="291" rx="115" ry="63" />
        <ellipse cx="464" cy="285" rx="101" ry="54" strokeWidth="1.200" />
        <path d="M364 278c8-30 54-48 100-48 50 0 92 21 101 49" strokeWidth=".8" />
      </g>
      <ellipse cx="464" cy="291" rx="115" ry="63" fill="none" stroke="#999" strokeWidth="1.200" clipPath="url(#rightArc)" />

      {/* contact pads */}
      {leftPads.map(([x, y]) => (
        <g key={x} transform={`translate(${x} ${y})`}>
          <path d="m-4-5 8 5v6l-8-5z" fill="#29231e" stroke="#b39b84" strokeWidth=".8" />
          <path d="m-4 12 8 5v6l-8-5z" fill="#75683f" opacity=".6" />
        </g>
      ))}
      {rightPads.map(([x, y]) => (
        <g key={x} transform={`translate(${x} ${y})`}>
          <path d="m-7-1 14-3v5l-14 3z" fill="#d9bf86" />
          <path d="m-7 15 14-3v5l-14 3z" fill="#75714c" opacity=".7" />
        </g>
      ))}

      {/* pointer */}
      <path d="M575 291v9l2-2 1 3 2-1-1-3h2z" fill="#fff" />
      <path d="M582 300h6v6h-6z" fill="#4ba3c0" stroke="#8ccbdc" strokeWidth=".6" />

      {/* triad */}
      <g fill="none">
        <path d="m135 470-11 3" stroke="#a00d12" strokeWidth="2.500" />
        <path d="m121 473 5-3v5z" fill="#a00d12" />
        <path d="m135 470-7-7" stroke="#2524c4" strokeWidth="2.500" />
        <path d="M135 470v-12" stroke="#22a32b" strokeWidth="2" />
        <path d="M135 467v-5" stroke="#eee" strokeWidth="1.500" />
        <circle cx="129" cy="463" r="1" fill="#ddd" />
        <circle cx="126" cy="471" r="1" fill="#ddd" />
        <path d="m135 449 2 3 2-3m-2 3v3" stroke="#1f7a25" />
        <path d="M125 456h4l-4 5h4" stroke="#2524b4" />
      </g>
    </svg>
  )
}

const headsUp: { icon: string; menu?: boolean }[] = [
  { icon: 'lens' },
  { icon: 'zoomArea' },
  { icon: 'view' },
  { icon: 'section' },
  { icon: 'viewCube', menu: true },
  { icon: 'body', menu: true },
  { icon: 'eye', menu: true },
  { icon: 'ball' },
  { icon: 'scene', menu: true },
  { icon: 'monitor', menu: true },
]

const taskTabs = ['home', 'library', 'folder', 'palette', 'ball', 'forum', 'sheet', 'cubeYellow']

function Viewport() {
  return (
    <main className="relative min-w-0 flex-1 overflow-hidden bg-black">
      <Scene />
      <div className="absolute inset-x-0 top-[4px] flex justify-center pr-[3px]">
        {headsUp.map((item) => (
          <div key={item.icon} className="flex items-center">
            <button aria-label={item.icon} className="flex w-[13px] justify-center">
              <Glyph name={item.icon} />
            </button>
            {item.menu && (
              <span className="flex w-[7px] justify-center">
                <Caret className="text-[#777]" />
              </span>
            )}
          </div>
        ))}
      </div>

      {/* selection breadcrumbs */}
      <div className="absolute top-[9px] left-[7px] text-[11px] leading-[12px] text-[#161616]">
        <div className="flex h-[12px] w-[106px] items-center bg-[#9a9a9a]">
          <span className="flex h-full w-[19px] items-center justify-center">
            <Glyph name="part" />
          </span>
          <span className="flex w-[16px] justify-center">
            <Glyph name="body" />
          </span>
          <span className="flex w-[16px] justify-center">
            <Glyph name="boss" />
          </span>
          <span className="w-[40px] whitespace-nowrap">Boss-Ex</span>
          <span className="flex h-full flex-1 items-center justify-center bg-[#789bab]">
            <span className="size-[8px] border border-[#286079] bg-[#427f98]" />
          </span>
        </div>
        <div className="mt-[3px] flex h-[12px] items-center pl-[62px]">
          <svg viewBox="0 0 8 8" className="size-[6px]" aria-hidden="true">
            <path d="M1 0v5h5M4 2l3 3-3 3" fill="none" stroke="#ccc" strokeWidth="1.500" />
          </svg>
          <span className="flex h-full w-[36px] items-center gap-[2px] bg-[#9a9a9a] pl-[2px]">
            <span className="size-[9px] shrink-0 border border-r-0 border-[#666]" />
            <span>Sketch</span>
          </span>
        </div>
      </div>

      {/* panel splitter */}
      <div className="absolute top-[191px] left-0 h-[20px] w-[4px] bg-[#666]">
        <span className="mt-[9px] ml-[1px] block size-[2px] bg-white" />
      </div>

      <div className="absolute top-[27px] right-0 flex w-[13px] flex-col bg-[#2e2e2e]">
        {taskTabs.map((icon) => (
          <button
            key={icon}
            aria-label={`${icon} tab`}
            className={`flex h-[12px] items-center justify-center border-b border-[#777] ${
              icon === 'home' ? 'bg-[#a8abad]' : ''
            }`}
          >
            <Glyph name={icon} />
          </button>
        ))}
      </div>
    </main>
  )
}

/* ---------- resources pane ---------- */

function Section({ title, children }: { title: string; children?: ReactNode }) {
  return (
    <section className="h-[48px] border-t border-[#8a8a8a] pt-[4px]">
      <h3 className="pl-[3px] text-[11px] leading-[16px] font-semibold text-white">{title}</h3>
      {children}
    </section>
  )
}

function ResourcesPane() {
  return (
    <aside className="flex w-[154px] shrink-0 flex-col overflow-hidden border-l-3 border-[#a8abad] bg-[#484848]">
      <div className="flex h-[11px] shrink-0 items-center bg-[#a0a4a7] pl-[1px]">
        <ChevronsRight className="size-[8px] text-black" strokeWidth={3} />
        <h2 className="flex-1 text-center text-[6px] font-semibold text-white">SOLIDWORKS Resources</h2>
        <button aria-label="Pane options" className="mr-[2px]">
          <Settings className="size-[8px] text-white" />
        </button>
        <button aria-label="Pin pane" className="mr-[2px]">
          <Pin className="size-[8px] rotate-45 fill-black text-black" />
        </button>
      </div>
      <div className="flex-1 border-t-2 border-l border-[#1c1c1c] pl-[11px] text-[11px] text-[#d5d5d5]">
        <a href="#welcome" className="flex h-[72px] items-center gap-[5px] pt-[4px] pl-[2px] whitespace-nowrap">
          <Glyph name="home" className="size-[17px]" />
          Welcome to SOLIDWO
        </a>
        <Section title="SOLIDWORKS Tools" />
        <Section title="Online Resources" />
        <Section title="Subscription Services">
          <a href="#subscription" className="flex items-center gap-[4px] pt-[7px] pl-[3px] leading-[18px] whitespace-nowrap">
            <Glyph name="globe" className="size-[18px]" />
            Subscription Services
          </a>
        </Section>
      </div>
    </aside>
  )
}

/* ---------- bottom ---------- */

function ModelTabs() {
  return (
    <div className="flex h-[9px] shrink-0 items-stretch border-t border-[#6e6e6e] bg-[#484848] leading-[8px]">
      <span className="w-[13px] bg-[#b9c4bf]" />
      <span className="flex w-[33px] items-center justify-around bg-[#9c9c9c]">
        <Caret className="rotate-90 text-[#777]" />
        <Caret className="rotate-90 text-[#777]" />
        <Caret className="-rotate-90 text-[#777]" />
        <Caret className="-rotate-90 text-[#777]" />
      </span>
      <button className="w-[29px] text-[6px] font-bold text-white">Model</button>
      <button className="w-[55px] border-r border-[#6e6e6e] bg-[#2b2b2b] text-[6px] text-[#ddd]">Motion Study 1</button>
    </div>
  )
}

function StatusBar() {
  return (
    <footer className="flex h-[8px] shrink-0 items-center border-t border-[#7c7c7c] bg-[#484848] text-[#e0e0e0]">
      <span className="flex-1 pl-[1px]">Edit Sketch.</span>
      <span className="w-[94px]">Editing Part</span>
      <span className="w-[26px]">MMGS</span>
      <span className="w-[15px]">
        <Caret className="rotate-180" />
      </span>
      <Crosshair className="mr-[3px] size-[7px] text-white" strokeWidth={3} />
    </footer>
  )
}

export default function App() {
  return (
    <div className="flex h-screen flex-col overflow-hidden bg-[#484848] font-['Open_Sans','Noto_Sans',sans-serif] text-[5px] leading-[8px]">
      <TitleBar />
      <ToolStrip />
      <Ribbon />
      <div className="flex min-h-0 flex-1">
        <div className="flex min-w-0 flex-1 flex-col">
          <CommandTabs />
          <div className="flex min-h-0 flex-1">
            <AppearancePanel />
            <Viewport />
          </div>
          <ModelTabs />
        </div>
        <ResourcesPane />
      </div>
      <StatusBar />
    </div>
  )
}
